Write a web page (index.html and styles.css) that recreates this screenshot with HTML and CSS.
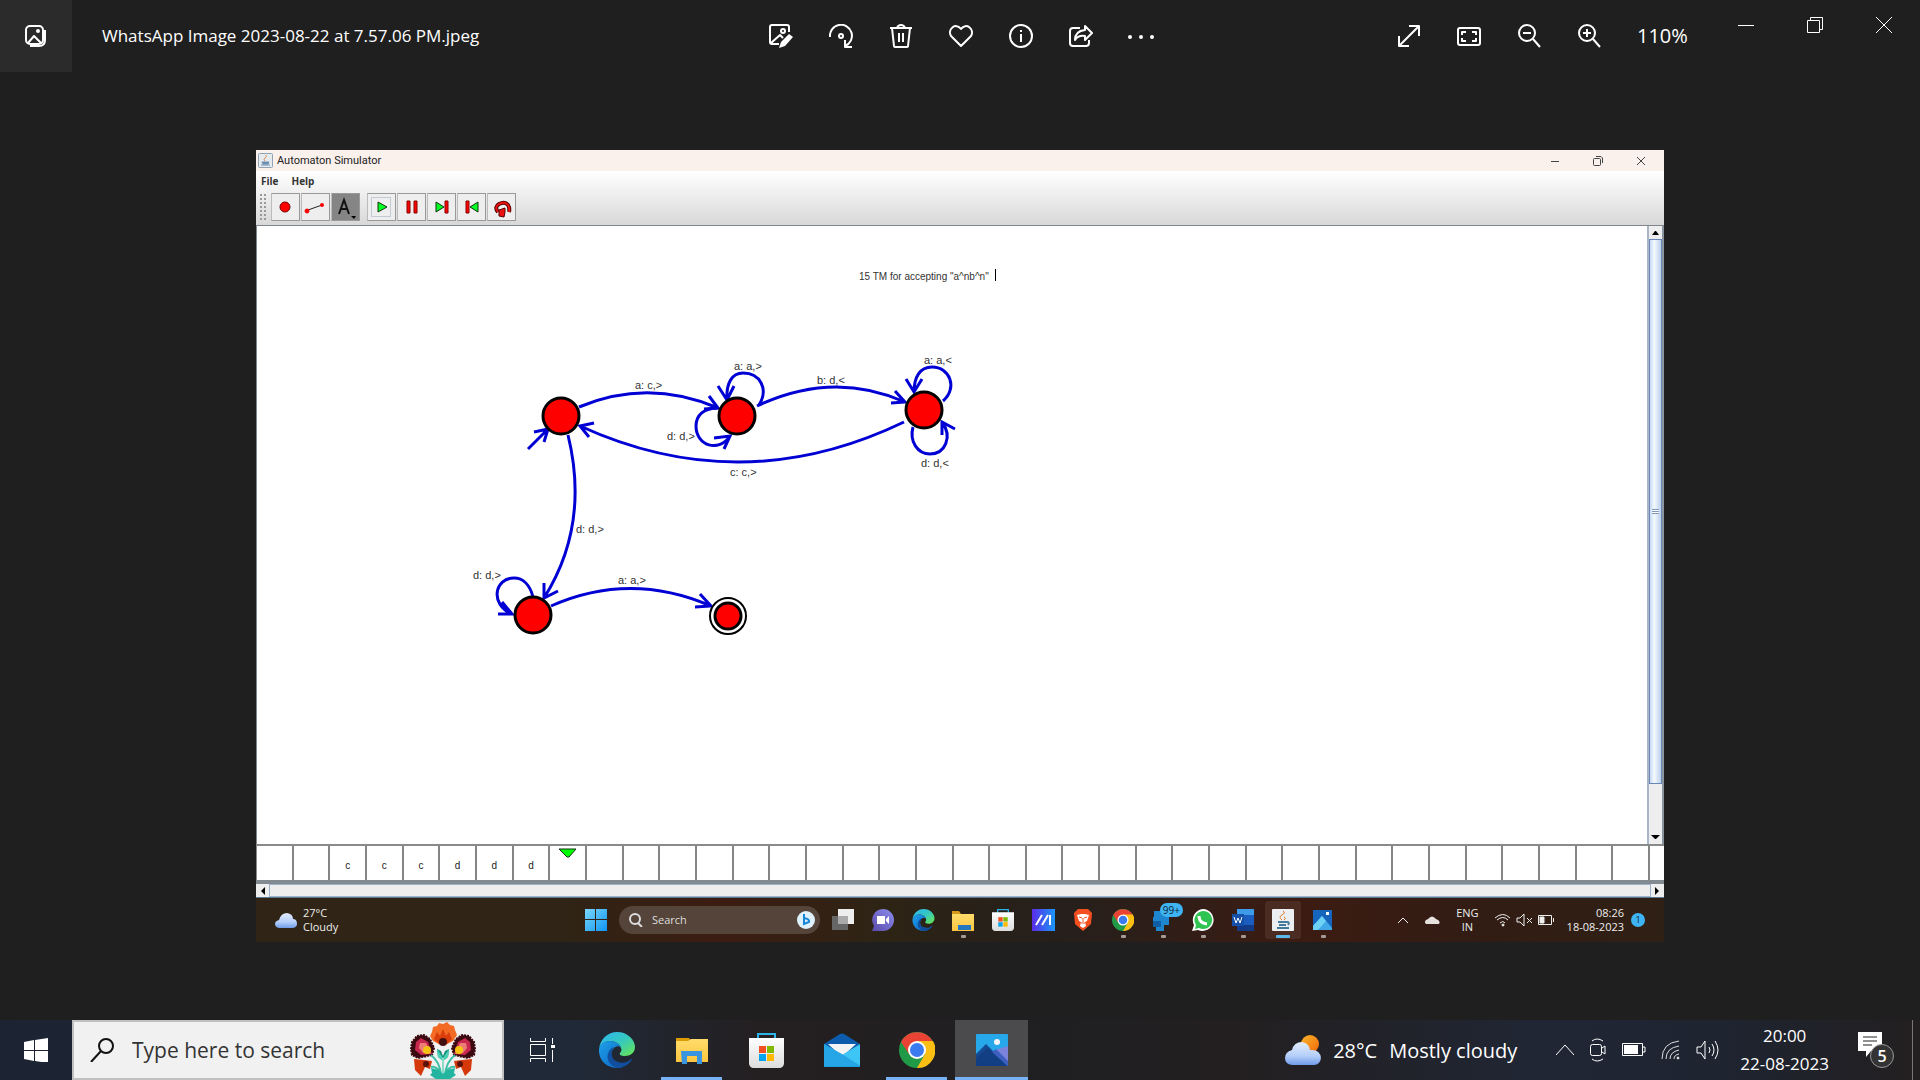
FILE: index.html
```
<!DOCTYPE html>
<html lang="en">
<head>
<meta charset="utf-8">
<title>Photos</title>
<link rel="stylesheet" href="styles.css">
</head>
<body>
<svg class="defs" aria-hidden="true">
  <linearGradient id="edgeTop" x1="0" y1="0" x2="1" y2="1"><stop offset="0" stop-color="#2db5f5"/><stop offset=".5" stop-color="#35c8c0"/><stop offset="1" stop-color="#6be74c"/></linearGradient>
  <linearGradient id="edgeLow" x1="0" y1="0" x2="1" y2="1"><stop offset="0" stop-color="#1fa0ea"/><stop offset="1" stop-color="#0a62c0"/></linearGradient>
  <linearGradient id="gold" x1="0" y1="0" x2="0" y2="1"><stop offset="0" stop-color="#ffdc6b"/><stop offset="1" stop-color="#fbc540"/></linearGradient>
  <linearGradient id="cloud" x1="0" y1="0" x2="0" y2="1"><stop offset="0" stop-color="#e3edfd"/><stop offset=".6" stop-color="#b5cffa"/><stop offset="1" stop-color="#6f9ce8"/></linearGradient>
  <linearGradient id="sun" x1="0" y1="0" x2="1" y2="1"><stop offset="0" stop-color="#fbb62a"/><stop offset="1" stop-color="#f0660c"/></linearGradient>
  <linearGradient id="bag" x1="0" y1="0" x2="0" y2="1"><stop offset="0" stop-color="#ffffff"/><stop offset="1" stop-color="#dcdcdc"/></linearGradient>
  <linearGradient id="pane" x1="0" y1="0" x2="1" y2="1"><stop offset="0" stop-color="#7ad8fb"/><stop offset="1" stop-color="#1094f2"/></linearGradient>
  <linearGradient id="ma" x1="0" y1="0" x2="1" y2="0"><stop offset="0" stop-color="#5a2ce8"/><stop offset="1" stop-color="#1b96f8"/></linearGradient>
  <linearGradient id="chat" x1="1" y1="0" x2="0" y2="1"><stop offset="0" stop-color="#8b8df0"/><stop offset="1" stop-color="#5b4aa8"/></linearGradient>
  <symbol id="i-edge" viewBox="0 0 36 36">
    <path d="M0 17C1 7 9 0 18 0c11 0 18 8 18 15 0 6-5 9-10 9-4 0-6-1-5-3 1-1 2-3 1-5-1-4-6-7-11-7C5 9 1 13 0 17z" fill="url(#edgeTop)"/>
    <path d="M0 17c1-5 5-8 11-8 5 0 10 3 11 7-2-3-7-2-9 3-3 8 5 18 12 16C11 39-1 30 0 17z" fill="url(#edgeLow)"/>
    <path d="M15 15c-4 5-3 13 4 15 5 2 10 0 13-3 1 0 1 0 0 2-3 4-8 7-14 7-7-2-11-9-9-14 1-4 3-6 6-7z" fill="#114f9e"/>
  </symbol>
  <symbol id="i-folder" viewBox="0 0 32 27">
    <path d="M0 1h13l2 3H0z" fill="#dd9b05"/><path d="M0 4h12l3-2h17v23H0z" fill="url(#gold)"/><path d="M5 14h21v13h-5v-8H11v8H6z" fill="#3a95e0"/>
  </symbol>
  <symbol id="i-store" viewBox="0 0 35 35">
    <path d="M9 7V1h17v6" fill="none" stroke="#2bb3ea" stroke-width="2"/><path d="M0 5h35v25c0 3-2 5-5 5H5c-3 0-5-2-5-5z" fill="url(#bag)"/>
    <path d="M10 13h7v7h-7z" fill="#f25022"/><path d="M18 13h7v7h-7z" fill="#7fba00"/><path d="M10 21h7v7h-7z" fill="#00a4ef"/><path d="M18 21h7v7h-7z" fill="#ffb900"/>
  </symbol>
  <symbol id="i-chrome" viewBox="0 0 36 36">
    <circle cx="18" cy="18" r="18" fill="#219a48"/>
    <path d="M2 10A18 18 0 0 1 34 10H18L10 22z" fill="#ea4235"/>
    <path d="M34 9A18 18 0 0 1 18 36l8-14-8-13z" fill="#fbbf14"/>
    <circle cx="18" cy="18" r="9" fill="#fff"/><circle cx="18" cy="18" r="7" fill="#3a7cf0"/>
  </symbol>
  <symbol id="i-photos" viewBox="0 0 32 32">
    <rect width="32" height="32" rx="1" fill="#27a8ea"/><path d="M32 12v18L18 18l4-3z" fill="#7b83da"/><circle cx="21" cy="8" r="3" fill="#f4f6fb"/>
    <path d="M0 20 10 10l22 22H0z" fill="#154a92"/><path d="m16 18 4-3 12 12v5z" fill="#3e5fc0"/><path d="M0 24 12 14l18 18H0z" fill="#123f83"/>
  </symbol>
</svg>

<header class="viewer-bar">
  <button class="gallery" aria-label="All photos">
    <svg width="24" height="24" viewBox="0 0 24 24" class="line"><rect x="2" y="2" width="17" height="18" rx="4"/><path d="m4 19 6-7 7 7M21 6v10q0 6-6 6H6"/><circle cx="14" cy="7" r="1" fill="#fff"/></svg>
  </button>
  <h1 class="file-name">WhatsApp Image 2023-08-22 at 7.57.06 PM.jpeg</h1>
  <nav class="tools">
    <button aria-label="Edit"><svg width="24" height="24" class="line"><path d="M20 8V3q0-2-2-2H3Q1 1 1 3v15q0 2 2 2h7M2 19l9-8 3 3"/><circle cx="14" cy="7" r="2"/><path d="m20 10 4 3-8 9-6 2 2-6z" fill="#fff" stroke="none"/></svg></button>
    <button aria-label="Rotate"><svg width="24" height="24" class="line"><path d="M1 13A11 11 0 1 1 16 22M16 16v7h7"/><circle cx="12" cy="12" r="2"/></svg></button>
    <button aria-label="Delete"><svg width="24" height="24" class="line"><path d="M1 4h22M8 4q1-3 4-3t4 3M3 4l2 18q0 1 2 1h10q2 0 2-1l2-18M10 9v9M14 9v9"/></svg></button>
    <button aria-label="Favourite"><svg width="24" height="24" class="line"><path d="M12 22 2 12C-2 5 7-2 12 5c5-7 14 0 10 7z"/></svg></button>
    <button aria-label="Info"><svg width="24" height="24" class="line"><circle cx="12" cy="12" r="11"/><path d="M12 10v8M12 6v2"/></svg></button>
    <button aria-label="Share"><svg width="24" height="24" class="line"><path d="M11 4H4Q1 4 1 7v12q0 3 3 3h13q3 0 3-3v-3M16 6V2l7 7-7 7v-4q-7-1-10 4Q6 7 16 6z"/></svg></button>
    <button aria-label="More"><svg width="28" height="24"><g fill="#fff"><circle cx="3" cy="13" r="2"/><circle cx="14" cy="13" r="2"/><circle cx="25" cy="13" r="2"/></g></svg></button>
  </nav>
  <nav class="tools zoom-tools">
    <button aria-label="Full screen"><svg width="24" height="24" class="line"><path d="m2 22 20-20M12 2h10v10M2 12v10h10"/></svg></button>
    <button aria-label="Fit to window"><svg width="24" height="24" class="line"><rect x="1" y="4" width="22" height="17" rx="2"/><path d="M5 11V8h4M15 8h4v3M19 14v3h-4M9 17H5v-3"/></svg></button>
    <button aria-label="Zoom out"><svg width="24" height="24" class="line"><circle cx="10" cy="9" r="8"/><path d="m16 15 7 8M6 9h8"/></svg></button>
    <button aria-label="Zoom in"><svg width="24" height="24" class="line"><circle cx="10" cy="9" r="8"/><path d="m16 15 7 8M6 9h8M10 5v8"/></svg></button>
    <output class="zoom-level">110%</output>
  </nav>
  <div class="window-tools">
    <button aria-label="Minimise"><svg width="16" height="16" class="hair"><path d="M0 8.500h16"/></svg></button>
    <button aria-label="Restore"><svg width="16" height="16" class="hair"><path d="M.5 3.500h12v12H.5zM3.500 3V.5h12v12H13"/></svg></button>
    <button aria-label="Close"><svg width="16" height="16" class="hair"><path d="m0 0 16 16M16 0 0 16"/></svg></button>
  </div>
</header>

<main class="stage">
  <section class="photo" aria-label="Automaton Simulator">
    <div class="sim-title">
      <svg width="15" height="15"><rect x=".5" y=".5" width="14" height="14" rx="1" fill="#e6ebf0" stroke="#8fa3b5"/><path d="M4 9h7l-1 2H5zM3 12h9" fill="#6a8eb0" stroke="#6a8eb0"/><path d="M7 8q-2-2 0-3t1-3" fill="none" stroke="#d98b55"/></svg>
      <span>Automaton Simulator</span>
      <div class="sim-window">
        <button aria-label="Minimise"><svg width="10" height="10" class="dark"><path d="M1 5.500h8"/></svg></button>
        <button aria-label="Restore"><svg width="10" height="10" class="dark"><rect x=".5" y="2.500" width="7" height="7" rx="1"/><path d="M3 .5h5l1.500 1.500v5"/></svg></button>
        <button aria-label="Close"><svg width="10" height="10" class="dark"><path d="m1 1 8 8M9 1 1 9"/></svg></button>
      </div>
    </div>
    <div class="sim-head">
      <nav class="sim-menu"><button>File</button><button>Help</button></nav>
      <div class="sim-tools">
        <i class="grip"></i>
        <div class="group">
          <button aria-label="State"><svg width="28" height="26"><circle cx="14" cy="13" r="5" fill="#f00" stroke="#700"/></svg></button>
          <button aria-label="Transition"><svg width="28" height="26"><path d="m7 16 14-5" stroke="#222"/><circle cx="6" cy="17" r="2" fill="#f00" stroke="#f00"/><circle cx="21" cy="11" r="2" fill="#f00"/></svg></button>
          <button class="on" aria-label="Text"><svg width="28" height="26"><path d="m8 20 5-14 5 14M10 15h7" fill="none" stroke="#111" stroke-width="2"/><path d="M20 22h5l-2 3z"/></svg></button>
        </div>
        <div class="group">
          <button aria-label="Play"><svg width="28" height="26"><rect x="4.500" y="3.500" width="19" height="19" fill="none" stroke="#c3cad6"/><path d="m11 8 9 5-9 5z" fill="#0f2" stroke="#131"/></svg></button>
          <button aria-label="Pause"><svg width="28" height="26"><path d="M10 7h3v12h-3zM17 7h3v12h-3z" fill="#f00" stroke="#800"/></svg></button>
          <button aria-label="Step forward"><svg width="28" height="26"><path d="m9 8 8 5-8 5z" fill="#0f2" stroke="#131"/><path d="M18 7h3v12h-3z" fill="#f00" stroke="#800"/></svg></button>
          <button aria-label="Step back"><svg width="28" height="26"><path d="m21 8-8 5 8 5z" fill="#0f2" stroke="#131"/><path d="M9 7h3v12H9z" fill="#f00" stroke="#800"/></svg></button>
          <button aria-label="Reset"><svg width="28" height="26"><path d="M11 18q-4-5 1-8 6-3 9 1 2 3 1 7" fill="none" stroke="#500" stroke-width="4"/><path d="M11 18q-4-5 1-8 6-3 9 1 2 3 1 7" fill="none" stroke="#e11" stroke-width="2"/><path d="m12 16 6-2v4l-1 5-5-1z" fill="#e11" stroke="#500"/></svg></button>
        </div>
      </div>
    </div>

    <div class="sim-body">
      <div class="board">
        <svg class="graph" width="1390" height="618" viewBox="256 226 1390 618">
          <g class="edges">
            <path d="M579 407Q648 378 718 408M709 396l9 12-14 1"/>
            <path d="M759 405C769 389 760 373 743 373c-11 0-17 10-16 27M718 386l9 14 7-14"/>
            <path d="M718 408c-14 0-22 7-22 18 0 20 23 27 34 10M714 438l16-2-6 13"/>
            <path d="M757 406Q833 370 905 402M895 391l10 11-14 1"/>
            <path d="M943 401c15-13 7-34-11-34-12 0-18 10-18 25M906 379l8 13 8-13"/>
            <path d="M913 427c-4 15 5 27 17 27 15 0 23-17 12-32M942 435v-13l13 7"/>
            <path d="M904 422Q742 500 580 426M594 423l-14 3 9 11"/>
            <path d="m528 449 20-20M534 432l14-3-4 13"/>
            <path d="M568 435Q590 525 544 598M544 583v15l14-7"/>
            <path d="M551 606Q630 571 711 606M700 594l11 12-16 1"/>
            <path d="M533 597c-3-12-10-19-19-19-19 0-25 26-2 36M502 602l10 12-14 0"/>
          </g>
          <g class="states">
            <circle cx="561" cy="416" r="18"/><circle cx="737" cy="416" r="18"/><circle cx="924" cy="410" r="18"/><circle cx="533" cy="615" r="18"/>
            <circle cx="728" cy="616" r="18" class="ring"/><circle cx="728" cy="616" r="13"/>
          </g>
          <g class="labels">
            <text x="859" y="280" class="caption">15 TM for accepting "a^nb^n"</text>
            <text x="635" y="389">a: c,&gt;</text><text x="734" y="370">a: a,&gt;</text><text x="817" y="384">b: d,&lt;</text>
            <text x="924" y="364">a: a,&lt;</text><text x="667" y="440">d: d,&gt;</text><text x="921" y="467">d: d,&lt;</text>
            <text x="730" y="476">c: c,&gt;</text><text x="576" y="533">d: d,&gt;</text><text x="618" y="584">a: a,&gt;</text><text x="473" y="579">d: d,&gt;</text>
          </g>
          <path d="M995.500 269v12" stroke="#000"/>
        </svg>
      </div>
      <div class="vscroll">
        <button aria-label="Scroll up"><svg width="13" height="13"><path d="M3 9h7L7 5H6z"/></svg></button>
        <div class="vtrack"><div class="vthumb"></div></div>
        <button aria-label="Scroll down"><svg width="13" height="13"><path d="M2 4h9L7 8H6z"/></svg></button>
      </div>
    </div>

    <div class="tape">
      <span></span><span></span><span>c</span><span>c</span><span>c</span><span>d</span><span>d</span><span>d</span>
      <span class="head"><svg width="19" height="10"><path d="M1 1h17l-7 8H9z" fill="#0f0" stroke="#131"/></svg></span>
      <span></span><span></span><span></span><span></span><span></span><span></span><span></span><span></span><span></span><span></span>
      <span></span><span></span><span></span><span></span><span></span><span></span><span></span><span></span><span></span><span></span>
      <span></span><span></span><span></span><span></span><span></span><span></span><span></span><span></span><span></span><span></span>
    </div>
    <div class="hscroll">
      <button aria-label="Scroll left"><svg width="13" height="12"><path d="M9 2v8L5 6z"/></svg></button>
      <div class="htrack"></div>
      <button aria-label="Scroll right"><svg width="13" height="12"><path d="M4 2v8l4-4z"/></svg></button>
    </div>

    <footer class="inner-bar">
      <div class="inner-weather">
        <svg width="22" height="15"><path d="M4 15q-4-1-4-4t4-4Q6 0 12 0q6 1 6 6 4 0 4 5 0 3-4 4z" fill="url(#cloud)"/></svg>
        <p>27°C<br>Cloudy</p>
      </div>
      <div class="inner-apps">
        <button class="inner-start" aria-label="Start"><svg width="22" height="22" fill="url(#pane)"><path d="M0 0h10v10H0zM11 0h11v10H11zM0 11h10v11H0zM11 11h11v11H11z"/></svg></button>
        <label class="inner-search">
          <svg width="14" height="14" fill="none" stroke="#ddd" stroke-width="2"><circle cx="6" cy="6" r="5"/><path d="m9 10 4 4"/></svg>
          <input type="text" placeholder="Search" aria-label="Search">
          <svg width="18" height="18"><circle cx="9" cy="9" r="9" fill="#dff1fd"/><path d="M7 3v10l5-2q1-3-5-4" fill="none" stroke="#1687d9" stroke-width="2"/></svg>
        </label>
        <button aria-label="Task view"><svg width="22" height="22"><path d="M0 7h16v14H0z" fill="#666"/><path d="M6 0h16v15H6z" fill="#eee"/><path d="M6 7h10v8H6z" fill="#aaa"/></svg></button>
        <button aria-label="Chat"><svg width="22" height="22"><path d="M11 0a11 11 0 1 1 0 22H0l2-5A11 11 0 0 1 11 0z" fill="url(#chat)"/><path d="M5 7h8v8H5zM14 10l3-3v8l-3-3z" fill="#fff"/></svg></button>
        <button aria-label="Edge"><svg width="23" height="22"><use href="#i-edge"/></svg></button>
        <button class="run" aria-label="Explorer"><svg width="22" height="21"><path d="M0 1h7l2 3H0z" fill="#d79a18"/><path d="M0 4h22v17H0z" fill="url(#gold)"/><path d="M6 15h13v5H6z" fill="#2377c0"/></svg></button>
        <button aria-label="Store"><svg width="22" height="22"><use href="#i-store"/></svg></button>
        <button aria-label="MyASUS"><svg width="23" height="22"><path d="M0 0h23v22H0z" fill="url(#ma)"/><path d="m4 16 6-10M10 16l6-10M18 6v10" fill="none" stroke="#fff" stroke-width="2"/></svg></button>
        <button aria-label="Brave"><svg width="20" height="22"><path d="M5 0h10l4 4-1 11-8 7-8-7L1 4z" fill="#f4501f"/><path d="m4 6 4-1h4l4 1-2 6-2 1 1 4-3 2-3-2 1-4-2-1z" fill="#fff"/><path d="m6 8 3 1M14 8l-3 1M10 9v4M8 14h4" stroke="#f4501f"/></svg></button>
        <button class="run" aria-label="Chrome"><svg width="22" height="22"><use href="#i-chrome"/></svg></button>
        <button class="run" aria-label="Phone Link"><svg width="22" height="22"><path d="M2 2h15v14h-5v6H4v-4H1V8h1z" fill="#1d86cf"/><path d="M1 12h8v6H1z" fill="#0f5fa6"/></svg><em>99+</em></button>
        <button class="run" aria-label="WhatsApp"><svg width="22" height="22"><path d="M11 0a11 11 0 1 1-5 21l-6 1 2-6A11 11 0 0 1 11 0z" fill="#fff"/><path d="M11 2a9 9 0 1 1-4 17l-4 1 1-4A9 9 0 0 1 11 2z" fill="#2fc452"/><path d="M7 7q0 7 8 8" fill="none" stroke="#fff" stroke-width="3"/></svg></button>
        <button class="run" aria-label="Word"><svg width="22" height="22"><path d="M5 0h17v22H5z" fill="#1b5dbe"/><path d="M5 0h17v6H5z" fill="#3e9be8"/><path d="M5 16h17v6H5z" fill="#123a86"/><path d="M0 5h12v12H0z" fill="#164fa8"/><path d="m2 8 2 6 2-5 2 5 2-6" fill="none" stroke="#fff"/></svg></button>
        <button class="run active" aria-label="Automaton Simulator"><svg width="22" height="22"><rect width="22" height="22" rx="1" fill="#eceff1"/><path d="M10 11q-4-3 0-5t1-4M12 11q3-2 0-3" fill="none" stroke="#e07a28"/><path d="M6 13h9q3 0 1 3M7 16h7M5 19h12" fill="none" stroke="#45799c" stroke-width="2"/></svg></button>
        <button class="run" aria-label="Photos"><svg width="20" height="22"><path d="M0 1h19v20H0z" fill="#1565bd"/><path d="M0 17 9 7l10 12v2H0z" fill="#41a9e8"/><path d="M0 17 9 7l4 5-8 9H0z" fill="#6ed2f4"/><path d="M13 3h3v3h-3z" fill="#fff"/></svg></button>
      </div>
      <div class="inner-tray">
        <svg width="10" height="6" fill="none" stroke="#eee" stroke-width="1"><path d="m0 6 5-5 5 5"/></svg>
        <svg class="tray-cloud" width="16" height="10"><path d="M2 9q-3-3 2-5 4-5 8 0 5 2 3 5z" fill="#e6e1df"/></svg>
        <p>ENG<br>IN</p>
        <svg width="60" height="14" fill="none" stroke="#eee"><path d="M0 5q8-7 15 0M2 7q6-5 11 0M5 10q3-3 5 0"/><circle cx="8" cy="12" r="1" fill="#eee"/><path d="M22 5h3l4-4v12l-4-4h-3zM32 5l5 5M37 5l-5 5M43.500 2.500h13v9h-13zM58.500 5v4"/><path d="M45 4h4v6h-4z" fill="#eee"/></svg>
        <p class="right">08:26<br>18-08-2023</p>
        <b>1</b>
      </div>
    </footer>
  </section>
</main>

<footer class="taskbar">
  <button class="start" aria-label="Start"><svg width="24" height="24" fill="#fff"><path d="M0 4l10-2v10H0zM11 2l13-2v12H11zM0 13h10v10L0 21zM11 13h13v12l-13-2z"/></svg></button>
  <label class="search">
    <svg width="24" height="24" fill="none" stroke="#111" stroke-width="2"><circle cx="16" cy="8" r="7"/><path d="M11 13 1 24"/></svg>
    <input type="text" placeholder="Type here to search" aria-label="Type here to search">
    <svg width="66" height="57" viewBox="0 0 66 57">
      <path d="M20 14l2-4 1-5 4-1 2-3 4 1 4-2 3 3 4 1 1 4 2 5-4 6-8 4h-4l-8-4z" fill="#f26a24"/>
      <path d="m24 17 3-7 3 4 3-7 3 7 3-4 3 7-5 5h-8z" fill="#d93d0b"/>
      <circle cx="33" cy="20" r="4" fill="#43100f"/>
      <g id="petal"><path d="M22 33 8 36l-6-3-1-6 1-7 5-6 7-1 6 4 4 9z" fill="#3c0a10" stroke="#3c0a10" stroke-dasharray="2 1" stroke-width="2"/><path d="M22 32 11 33l-6-5 1-8 5-4 7 4z" fill="#c9284e"/><path d="m21 32-8-1-4-5 1-5 6 0z" fill="#ee7d76"/><circle cx="17" cy="28" r="4" fill="#f5c211"/>
      <path d="m4 37 10 1 8 1-2 8-5-2-4 9-6-6z" fill="#d4380b"/><circle cx="16" cy="42" r="3" fill="#5c120b"/><path d="M31 53Q30 40 21 33M31 50q-6-6-10-5" fill="none" stroke="#3fbfa6" stroke-width="2"/></g>
      <use href="#petal" transform="matrix(-1 0 0 1 66 0)"/>
      <path d="m27 27 4 2 2 5 2-5 4-2-1 8-5 4-5-4z" fill="#138f7d"/><path d="m27 27 6 9 6-9-1 8-5 4-5-4z" fill="#4bd0b5"/>
      <path d="M33 36v20" stroke="#8adbc8" stroke-width="2"/><path d="m33 52-4-4-8-2 1 5-2 2 6 4h14l6-4-2-2 1-5-8 2z" fill="#24b5a0"/>
    </svg>
  </label>
  <nav class="apps">
    <button aria-label="Task view"><svg width="26" height="24" class="hair"><path d="M1.500 0v3.500h15V0M1.500 6.500h15v11h-15zM1.500 24v-3.500h15V24M23.500 0v6M23.500 12v12"/><path d="M22 7h4v3h-4z" fill="#fff" stroke="none"/></svg></button>
    <button aria-label="Edge"><svg width="36" height="36"><use href="#i-edge"/></svg></button>
    <button class="open" aria-label="File Explorer"><svg width="32" height="27"><use href="#i-folder"/></svg></button>
    <button aria-label="Microsoft Store"><svg width="35" height="35"><use href="#i-store"/></svg></button>
    <button aria-label="Mail"><svg width="36" height="34"><path d="M0 11 16 1q2-1 4 0l16 10-18 12z" fill="#0d5bac"/><path d="M4 11h28L18 24z" fill="#f4f4f4"/><path d="m0 11 36 22v1H0z" fill="#1e9fe3"/><path d="M36 11v22L18 22z" fill="#3cc5f5"/><path d="M0 11v22h36L18 21z" fill="#26a6e6"/></svg></button>
    <button class="open" aria-label="Chrome"><svg width="36" height="36"><use href="#i-chrome"/></svg></button>
    <button class="open current" aria-label="Photos"><svg width="32" height="32"><use href="#i-photos"/></svg></button>
  </nav>
  <div class="tray">
    <button class="weather">
      <svg width="36" height="31"><circle cx="25" cy="9" r="9" fill="url(#sun)"/><path d="M7 30q-7-1-7-7t7-8q2-8 10-8 7 1 8 8 10-1 11 8-1 7-7 7z" fill="url(#cloud)"/></svg>
      <span>28°C</span><span>Mostly cloudy</span>
    </button>
    <svg class="chevron" width="18" height="12" fill="none" stroke="#fff" stroke-width="1"><path d="m0 11 9-10 9 10"/></svg>
    <svg width="18" height="24" fill="none" stroke="#fff"><rect x="1.500" y="6.500" width="11" height="11" rx="2"/><path d="m13 10 3-2v8l-3-2M3 3q5-4 11 0M3 21q5 4 11 0"/></svg>
    <svg width="24" height="14"><path d="M.5.5h20v12H.5zM21 4h2v5h-2" fill="none" stroke="#fff"/><path d="M2 2h14v9H2z" fill="#fff"/></svg>
    <svg width="20" height="20" fill="none" stroke="#ddd"><path d="M1 19Q1 3 18 1M5 19Q5 8 18 6M9 19q0-7 9-9M13 19q0-4 5-5"/><circle cx="17" cy="18" r="1" fill="#fff"/></svg>
    <svg width="24" height="20" fill="none" stroke="#fff"><path d="M1 7h4l4-6v18l-4-6H1zM13 7q2 3 0 6M16 4q4 6 0 12M19 1q6 9 0 18"/></svg>
    <time>20:00<br>22-08-2023</time>
    <button class="notes" aria-label="Notifications"><svg width="24" height="26"><path d="M0 0h24v19H13l-5 6v-6H0z" fill="#fff"/><path d="M5 5h14M5 9h14M5 13h9" stroke="#222"/></svg><em>5</em></button>
    <i class="peek"></i>
  </div>
</footer>
</body>
</html>
```
FILE: styles.css
```
* { box-sizing: border-box; }
body {
  margin: 0;
  min-height: 100vh;
  display: flex;
  flex-direction: column;
  background: #1f1f1f;
  color: #fff;
  font-family: "Open Sans", "Noto Sans", sans-serif;
}
button {
  margin: 0;
  padding: 0;
  border: 0;
  background: none;
  color: inherit;
  font: inherit;
  display: flex;
  align-items: center;
  justify-content: center;
}
input { border: 0; padding: 0; background: none; font: inherit; color: inherit; min-width: 0; flex: 1; outline: 0; }
svg { display: block; flex: none; }
p { margin: 0; }
em { font-style: normal; }
.defs { position: absolute; width: 0; height: 0; }
.line { fill: none; stroke: #fff; stroke-width: 2; stroke-linejoin: round; }
.hair { fill: none; stroke: #fff; stroke-width: 1; }
.dark { fill: none; stroke: #444; stroke-width: 1; }

/* Viewer header */
.viewer-bar {
  display: grid;
  grid-template-columns: 72px minmax(0, 679px) auto minmax(0, 1fr) auto;
  height: 72px;
}
.gallery { background: #2b2b2b; height: 72px; }
.file-name { margin: 0; padding-left: 30px; font-size: 17px; line-height: 72px; font-weight: 400; white-space: nowrap; }
.tools { display: flex; align-items: center; }
.tools button { width: 60px; height: 72px; }
.zoom-tools { justify-content: flex-end; padding-right: 16px; }
.zoom-level { width: 76px; padding-left: 18px; font-size: 20px; line-height: 70px; }
.window-tools { display: flex; align-items: flex-start; padding-right: 2px; }
.window-tools button { width: 69px; height: 50px; }

/* Photo area */
.stage { flex: 1; display: flex; padding: 78px 13.3333%; }
.photo {
  flex: 1;
  min-width: 0;
  display: flex;
  flex-direction: column;
  background: #fff;
  color: #222;
  font-size: 11px;
  overflow: hidden;
}
.sim-title { display: flex; align-items: center; height: 21px; padding-left: 2px; gap: 4px; background: #faf0ec; font-family: Roboto, "Open Sans", sans-serif; }
.sim-window { display: flex; margin-left: auto; padding-right: 2px; }
.sim-window button { width: 43px; height: 21px; }
.sim-head { height: 55px; background: linear-gradient(#fff, #d8d8d8); border-bottom: 1px solid #7f868e; }
.sim-menu { display: flex; gap: 13px; padding-left: 5px; height: 20px; font-weight: 700; font-size: 10px; color: #333; }
.sim-tools { display: flex; height: 32px; align-items: center; padding-left: 3px; }
.grip { width: 8px; height: 28px; margin-right: 4px; background: radial-gradient(circle, #999 1px, transparent 1px) 0 0 / 4px 4px; }
.group { display: flex; gap: 1px; margin-right: 7px; }
.group button { width: 29px; height: 28px; background: #eee; border: 1px solid #999; border-left-color: #bbb; overflow: hidden; }
.group .on { background: #858585; }

.sim-body { flex: 1; display: flex; min-height: 0; border-left: 1px solid #7f868e; }
.board { flex: 1; min-width: 0; position: relative; overflow: hidden; }
.graph { position: absolute; left: -1px; top: 0; }
.edges { fill: none; stroke: #0000d4; stroke-width: 3; }
.states { fill: #f00; stroke: #000; stroke-width: 3; }
.states .ring { fill: #fff; stroke-width: 2; }
.labels { font: 11px "Liberation Sans", sans-serif; fill: #333; }
.caption { font-size: 10px; }
.vscroll { width: 17px; display: flex; flex-direction: column; border-left: 2px solid #a9b6c8; border-right: 2px solid #8b95a0; background: #eee; }
.vscroll button, .hscroll button { width: 13px; height: 13px; background: #eee; }
.vtrack { flex: 1; display: flex; flex-direction: column; }
.vthumb {
  height: 92%;
  border: 1px solid #6a86b8;
  background: repeating-linear-gradient(#7f98c0 0 1px, #fff 1px 2px) center / 7px 5px no-repeat, linear-gradient(90deg, #c8daf2, #f4f9ff 40%, #b8cfe8);
}

.tape { display: grid; grid-template-columns: repeat(38, 1fr) 14px; height: 36px; border-top: 2px solid #8a8a8a; border-left: 1px solid #8a8a8a; }
.tape span { border-right: 2px solid #858585; text-align: center; font: 10px/40px "Liberation Sans", sans-serif; }
.tape span:last-child { border: 0; }
.tape .head { display: flex; justify-content: center; padding-top: 2px; }
.hscroll { display: flex; height: 18px; border-top: 4px solid #828a92; border-bottom: 1px solid #5a7890; background: #eee; }
.htrack { flex: 1; border: 1px solid #9fb4cc; }

.inner-bar {
  display: grid;
  grid-template-columns: 1fr auto 1fr;
  align-items: center;
  height: 44px;
  background: linear-gradient(90deg, #2f2415 0, #2f2415 22%, #3c1c12 33%, #2e2415 44%, #251f1c 57%, #3c1c12 74%, #321c14 86%, #2f2015);
  color: #eee;
  font-size: 11px;
  line-height: 14px;
}
.inner-weather { display: flex; align-items: center; gap: 6px; padding-left: 19px; }
.inner-apps { display: flex; align-items: center; padding-left: 8px; }
.inner-apps button { position: relative; width: 40px; height: 44px; }
.inner-apps .inner-start { width: 22px; margin-right: 12px; }
.inner-search { display: flex; align-items: center; width: 201px; height: 28px; margin-right: 3px; padding: 0 5px 0 10px; gap: 9px; border-radius: 14px; background: #54443a; }
.inner-search input::placeholder { color: #ddd; opacity: 1; }
.inner-apps .run::after { content: ""; position: absolute; left: 18px; bottom: 4px; width: 5px; height: 3px; border-radius: 1px; background: #a59a96; }
.inner-apps .active { width: 36px; height: 38px; margin: 0 2px; background: #4a2c22; border-radius: 3px; }
.inner-apps .active::after { left: 11px; bottom: 1px; width: 14px; background: #5cb8e8; }
.inner-apps em { position: absolute; right: 0; top: 5px; padding: 0 3px; border-radius: 7px; background: #3eb4f4; color: #123; font-size: 10px; line-height: 14px; }
.inner-tray { display: flex; align-items: center; justify-content: flex-end; gap: 16px; padding-right: 19px; text-align: center; }
.inner-tray .right { text-align: right; margin-left: -4px; }
.inner-tray b { width: 14px; height: 14px; margin-left: -9px; border-radius: 7px; background: #3eb4f4; color: #123; font-weight: 400; font-size: 9px; }

/* Desktop taskbar */
.taskbar { display: flex; height: 60px; background: linear-gradient(90deg, #1c2433 0, #202938 30%, #241f20 40%, #1f1f22 55%, #231f20 64%, #202634 80%, #1e2430 90%, #231f20); }
.start { width: 72px; }
.search { display: flex; align-items: center; width: 432px; padding: 0 26px 0 16px; gap: 18px; border: 2px solid #c0c0c0; background: #f1f1f1; color: #222; font-size: 21px; }
.search input::placeholder { color: #333; opacity: 1; }
.apps { display: flex; gap: 2px; padding-left: 1px; }
.apps button { position: relative; width: 73px; height: 60px; }
.apps .open::after { content: ""; position: absolute; left: 6px; right: 6px; bottom: 0; height: 3px; background: #76b2f5; }
.apps .current { background: #4b4a4d; }
.apps .current::after { left: 0; right: 0; }
.tray { display: flex; align-items: center; margin-left: auto; gap: 15px; }
.weather { gap: 12px; font-size: 20px; margin-right: 24px; white-space: nowrap; }
.tray time { margin-left: 5px; font-size: 17px; line-height: 28px; text-align: center; }
.notes { position: relative; width: 36px; height: 36px; margin-left: 14px; align-items: flex-start; justify-content: flex-start; }
.notes em { position: absolute; right: 0; bottom: 0; width: 24px; height: 24px; border: 1px solid #999; border-radius: 12px; background: #333; font-size: 16px; line-height: 22px; font-weight: 600; }
.peek { width: 8px; height: 60px; margin-left: 3px; border-left: 1px solid #777; }
```
